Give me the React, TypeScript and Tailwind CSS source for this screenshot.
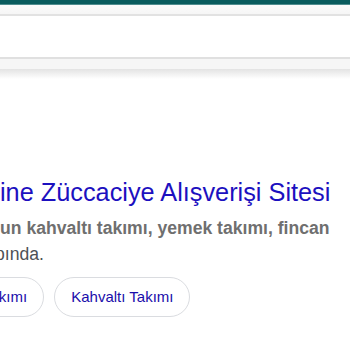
const font = { fontFamily: '"Liberation Sans", Arial, sans-serif' }

const Chip = ({ label, className = "" }: { label: string; className?: string }) => (
  <div
    className={`flex h-[40px] shrink-0 items-center rounded-full border border-[#dadce0] bg-white px-4 text-[15px] text-[#1a0dab] ${className}`}
  >
    {label}
  </div>
)

export default function App() {
  return (
    <div className="h-[350px] w-[350px] overflow-hidden bg-white" style={font}>
      {/* header edge */}
      <div className="h-[5px] bg-[#0a5c5e] border-b border-[#4f8d8f]" />
      <div className="h-[11px] bg-gradient-to-b from-[#fbfbfb] to-[#f6f6f6] border-b-2 border-[#e2e2e2]" />
      <div className="h-[41px] bg-white" />

      {/* tabs strip */}
      <div className="h-[12px] bg-[#f6f6f6] border-t-2 border-[#e0e0e0]" />
      <div className="h-[10px] bg-gradient-to-b from-[#e3e3e3] to-white" />

      <div className="pt-[97px]">
        <h3 className="whitespace-nowrap text-[25.3px] leading-[32px] text-[#1c10bf]">
          ine Züccaciye Alışverişi Sitesi
        </h3>
        <div className="mt-[7px] whitespace-nowrap text-[17.6px] leading-[26px] text-[#4d5156]">
          <div className="font-bold text-[#6f6f6f]">un kahvaltı takımı, yemek takımı, fincan</div>
          <div className="-ml-[5px]">pında.</div>
        </div>

        <div className="mt-[10px] flex gap-[10px]">
          <Chip label="Takımı" className="-ml-[34px]" />
          <Chip label="Kahvaltı Takımı" />
        </div>
      </div>
    </div>
  )
}
